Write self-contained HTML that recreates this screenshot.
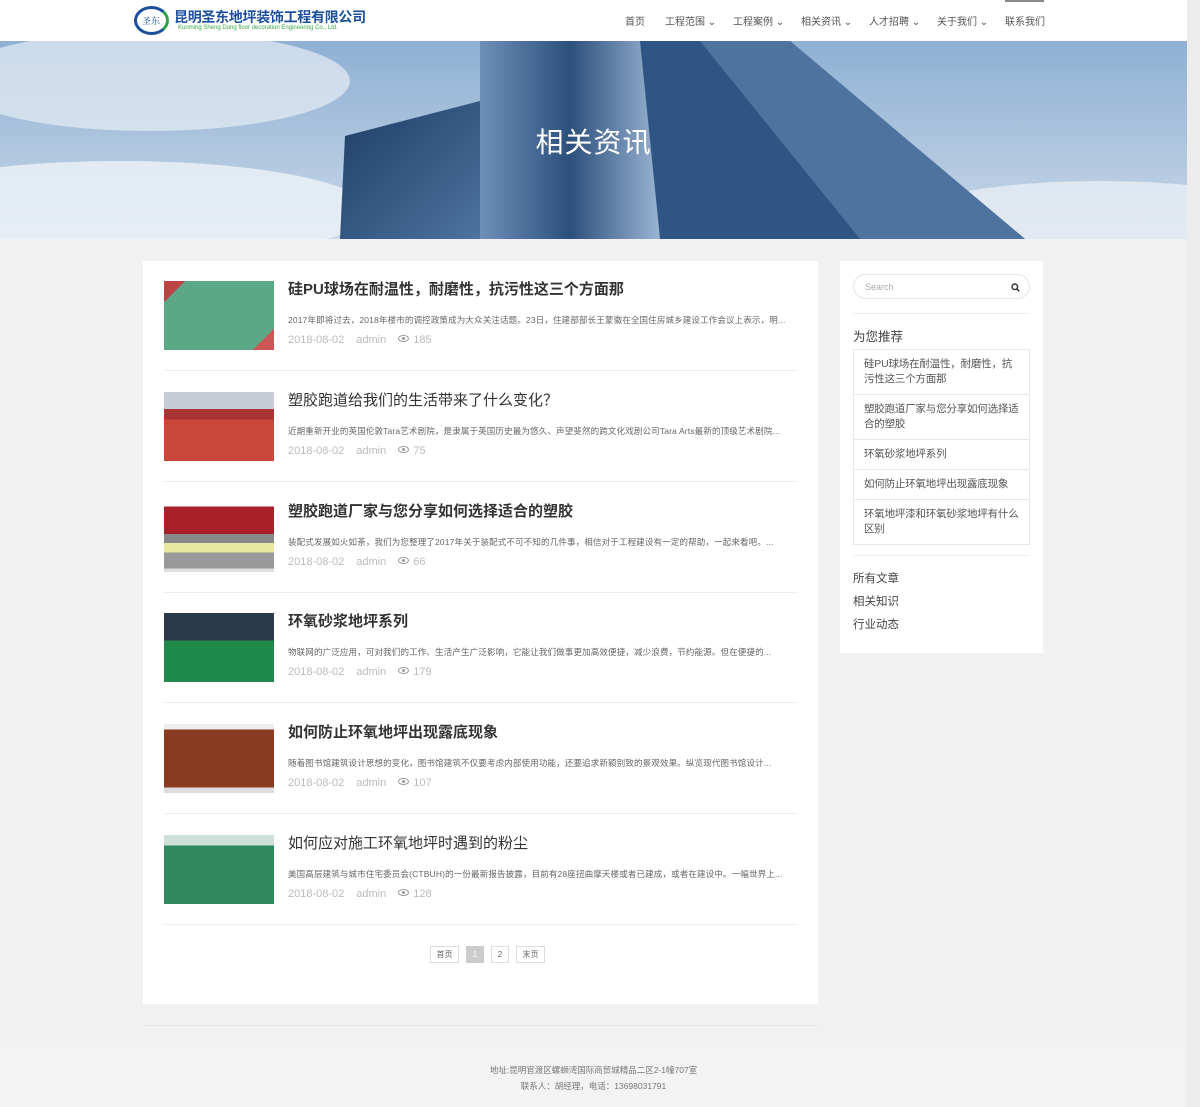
<!DOCTYPE html>
<html><head><meta charset="utf-8"><style>
*{margin:0;padding:0;box-sizing:border-box}
body{width:1200px;height:1107px;background:#f1f1f1;font-family:"Liberation Sans","Noto Sans CJK SC",sans-serif;position:relative;overflow:hidden;color:#333}
.wrap{position:absolute;left:0;top:0;width:1187px;height:1107px;background:#f1f1f1}
.strip{position:absolute;left:1187px;top:0;width:13px;height:1107px;background:#ececec}
.hdr{position:absolute;left:0;top:0;width:1187px;height:41px;background:#fff}
.logo{position:absolute;left:134px;top:6px;width:35px;height:29px;border-radius:50%;border:3px solid #1b4f9c;border-right-color:#2aa34a}
.logo span{position:absolute;left:5px;top:5px;font-size:9px;color:#1b4f9c;font-family:"Noto Serif CJK SC",serif}
.lt1{position:absolute;left:174px;top:7px;font-size:14px;font-weight:bold;color:#1b4f9c;letter-spacing:-.3px}
.lt2{position:absolute;left:178px;top:25px;font-size:6px;color:#3aa84a;white-space:nowrap}
.nav{position:absolute;top:13px;font-size:10px;color:#555;white-space:nowrap}
.navtop{position:absolute;left:1005px;top:0;width:39px;height:2px;background:#888}
.banner{position:absolute;left:0;top:41px;width:1187px;height:198px;overflow:hidden}
.btitle{position:absolute;left:0;width:1187px;top:80px;text-align:center;color:#fff;font-size:28px;letter-spacing:1px}
.card{position:absolute;left:143px;top:261px;width:675px;height:743px;background:#fff}
.row{position:absolute;left:21px;width:634px;height:111px}
.row .th{position:absolute;left:0;top:0;width:110px;height:69px}
.row .t{position:absolute;left:124px;top:-3px;font-size:15px;color:#333;white-space:nowrap}
.row .t.b{font-weight:bold}
.row .e{position:absolute;left:124px;top:33px;font-size:8.5px;letter-spacing:.15px;color:#666;white-space:nowrap;width:512px;overflow:hidden}
.row .m{position:absolute;left:124px;top:53px;font-size:11px;color:#bbb;white-space:nowrap}
.row .m i{font-style:normal;margin-right:12px}
.row .ln{position:absolute;left:0;top:89px;width:634px;height:1px;background:#eee}
.eye{display:inline-block;width:11px;height:7px;border:1.5px solid #999;border-radius:50%;position:relative;vertical-align:1px;margin-right:4px}
.eye:after{content:"";position:absolute;left:2.5px;top:.5px;width:3px;height:3px;border-radius:50%;background:#999}
.pg{position:absolute;top:946px;height:17px;border:1px solid #ddd;font-size:8px;color:#666;text-align:center;line-height:15px}
.side{position:absolute;left:840px;top:261px;width:203px;height:392px;background:#fff}
.search{position:absolute;left:13px;top:13px;width:177px;height:25px;border:1px solid #e5e5e5;border-radius:13px;font-size:9px;color:#aaa;padding:7px 0 0 11px}
.sl{position:absolute;left:13px;width:177px;height:1px;background:#eee}
.rec{position:absolute;left:13px;top:88px;width:177px;border:1px solid #e8e8e8}
.rec div{border-top:1px solid #e8e8e8;padding:7px 8px 7px 10px;font-size:10.5px;color:#555;line-height:15px;letter-spacing:-.2px}
.rec div:first-child{border-top:none}
.cat{position:absolute;left:13px;font-size:11.5px;color:#444}
.fline{position:absolute;left:143px;top:1025px;width:675px;height:1px;background:#e6e6e6}
.foot{position:absolute;left:0;top:1047px;width:1187px;height:60px;background:#f3f3f3;text-align:center;font-size:8.5px;color:#777;padding-top:15px;line-height:16px}
</style></head><body>
<div class="wrap">
<div class="hdr">
 <div class="logo"><span>圣东</span></div>
 <div class="lt1">昆明圣东地坪装饰工程有限公司</div>
 <div class="lt2">Kunming Sheng Dong floor decoration Engineering Co., Ltd.</div>
 <div class="nav" style="left:625px">首页</div>
 <div class="nav" style="left:665px">工程范围 ⌄</div>
 <div class="nav" style="left:733px">工程案例 ⌄</div>
 <div class="nav" style="left:801px">相关资讯 ⌄</div>
 <div class="nav" style="left:869px">人才招聘 ⌄</div>
 <div class="nav" style="left:937px">关于我们 ⌄</div>
 <div class="nav" style="left:1005px">联系我们</div>
 <div class="navtop"></div>
</div>
<div class="banner">
<svg width="1187" height="198" viewBox="0 0 1187 198">
<defs>
<linearGradient id="sky" x1="0" y1="0" x2="0" y2="1"><stop offset="0" stop-color="#8fb0d3"/><stop offset="1" stop-color="#c9d8e8"/></linearGradient>
<linearGradient id="b1" x1="0" y1="0" x2="1" y2="1"><stop offset="0" stop-color="#1e3d66"/><stop offset="1" stop-color="#4d739e"/></linearGradient>
<linearGradient id="b2" x1="0" y1="0" x2="1" y2="0"><stop offset="0" stop-color="#6d8fb8"/><stop offset=".5" stop-color="#2d4f7c"/><stop offset="1" stop-color="#9ab5d3"/></linearGradient>
</defs>
<rect width="1187" height="198" fill="url(#sky)"/>
<ellipse cx="150" cy="40" rx="200" ry="50" fill="#e6edf5" opacity=".7"/>
<ellipse cx="120" cy="170" rx="250" ry="50" fill="#eef2f7" opacity=".8"/>
<ellipse cx="1100" cy="180" rx="200" ry="40" fill="#e8eef5" opacity=".8"/>
<polygon points="345,95 480,60 480,198 340,198" fill="url(#b1)"/>
<polygon points="480,0 640,0 660,198 480,198" fill="url(#b2)"/>
<polygon points="640,0 790,0 1025,198 660,198" fill="#2f5584"/>
<polygon points="700,0 790,0 1025,198 860,198" fill="#5d80ab" opacity=".7"/>
</svg>
<div class="btitle">相关资讯</div>
</div>

<div class="card">
 <div class="row" style="top:20px"><div class="th" style="background:linear-gradient(135deg,#b44 0 12%,#5aa886 12% 88%,#c55 88%)"></div><div class="t b">硅PU球场在耐温性，耐磨性，抗污性这三个方面那</div><div class="e">2017年即将过去，2018年楼市的调控政策成为大众关注话题。23日，住建部部长王蒙徽在全国住房城乡建设工作会议上表示，明...</div><div class="m"><i>2018-08-02</i><i>admin</i><span class="eye"></span>185</div><div class="ln"></div></div>
 <div class="row" style="top:131px"><div class="th" style="background:linear-gradient(180deg,#c8ccd6 0 25%,#a33 25% 40%,#c9473a 40%)"></div><div class="t">塑胶跑道给我们的生活带来了什么变化？</div><div class="e">近期重新开业的英国伦敦Tara艺术剧院，是隶属于英国历史最为悠久、声望斐然的跨文化戏剧公司Tara Arts最新的顶级艺术剧院...</div><div class="m"><i>2018-08-02</i><i>admin</i><span class="eye"></span>75</div><div class="ln"></div></div>
 <div class="row" style="top:242px"><div class="th" style="background:linear-gradient(180deg,#fff 0 5%,#a8202a 5% 45%,#888 45% 58%,#e8e8a0 58% 72%,#999 72% 95%,#ddd 95%)"></div><div class="t b">塑胶跑道厂家与您分享如何选择适合的塑胶</div><div class="e">装配式发展如火如荼，我们为您整理了2017年关于装配式不可不知的几件事，相信对于工程建设有一定的帮助，一起来看吧。...</div><div class="m"><i>2018-08-02</i><i>admin</i><span class="eye"></span>66</div><div class="ln"></div></div>
 <div class="row" style="top:352px"><div class="th" style="background:linear-gradient(180deg,#2a3a4a 0 40%,#1f8a4a 40%)"></div><div class="t b">环氧砂浆地坪系列</div><div class="e">物联网的广泛应用，可对我们的工作、生活产生广泛影响，它能让我们做事更加高效便捷，减少浪费，节约能源。但在便捷的...</div><div class="m"><i>2018-08-02</i><i>admin</i><span class="eye"></span>179</div><div class="ln"></div></div>
 <div class="row" style="top:463px"><div class="th" style="background:linear-gradient(180deg,#eee 0 8%,#8a3a20 8% 92%,#ddd 92%)"></div><div class="t b">如何防止环氧地坪出现露底现象</div><div class="e">随着图书馆建筑设计思想的变化，图书馆建筑不仅要考虑内部使用功能，还要追求新颖别致的景观效果。纵览现代图书馆设计...</div><div class="m"><i>2018-08-02</i><i>admin</i><span class="eye"></span>107</div><div class="ln"></div></div>
 <div class="row" style="top:574px"><div class="th" style="background:linear-gradient(180deg,#cfe0d8 0 15%,#2e8a5e 15%)"></div><div class="t">如何应对施工环氧地坪时遇到的粉尘</div><div class="e">美国高层建筑与城市住宅委员会(CTBUH)的一份最新报告披露，目前有28座扭曲摩天楼或者已建成，或者在建设中。一幅世界上...</div><div class="m"><i>2018-08-02</i><i>admin</i><span class="eye"></span>128</div><div class="ln"></div></div>
</div>
<div class="pg" style="left:430px;width:29px">首页</div>
<div class="pg" style="left:466px;width:18px;background:#ccc;border-color:#ccc;color:#fff">1</div>
<div class="pg" style="left:491px;width:18px">2</div>
<div class="pg" style="left:516px;width:29px">末页</div>

<div class="side">
 <div class="search">Search<svg style="position:absolute;right:9px;top:8px" width="9" height="9" viewBox="0 0 9 9"><circle cx="3.8" cy="3.8" r="2.8" fill="none" stroke="#333" stroke-width="1.4"/><path d="M5.8 5.8L8.3 8.3" stroke="#333" stroke-width="1.5"/></svg></div>
 <div class="sl" style="top:52px"></div>
 <div class="cat" style="top:65px;font-size:12.5px">为您推荐</div>
 <div class="rec">
  <div>硅PU球场在耐温性，耐磨性，抗污性这三个方面那</div>
  <div>塑胶跑道厂家与您分享如何选择适合的塑胶</div>
  <div>环氧砂浆地坪系列</div>
  <div>如何防止环氧地坪出现露底现象</div>
  <div>环氧地坪漆和环氧砂浆地坪有什么区别</div>
 </div>
 <div class="sl" style="top:294px"></div>
 <div class="cat" style="top:309px">所有文章</div>
 <div class="cat" style="top:332px">相关知识</div>
 <div class="cat" style="top:355px">行业动态</div>
</div>
<div class="fline"></div>
<div class="foot">地址:昆明官渡区螺蛳湾国际商贸城精品二区2-1幢707室<br>联系人：胡经理，电话：13698031791</div>
</div>
<div class="strip"></div>
</body></html>
